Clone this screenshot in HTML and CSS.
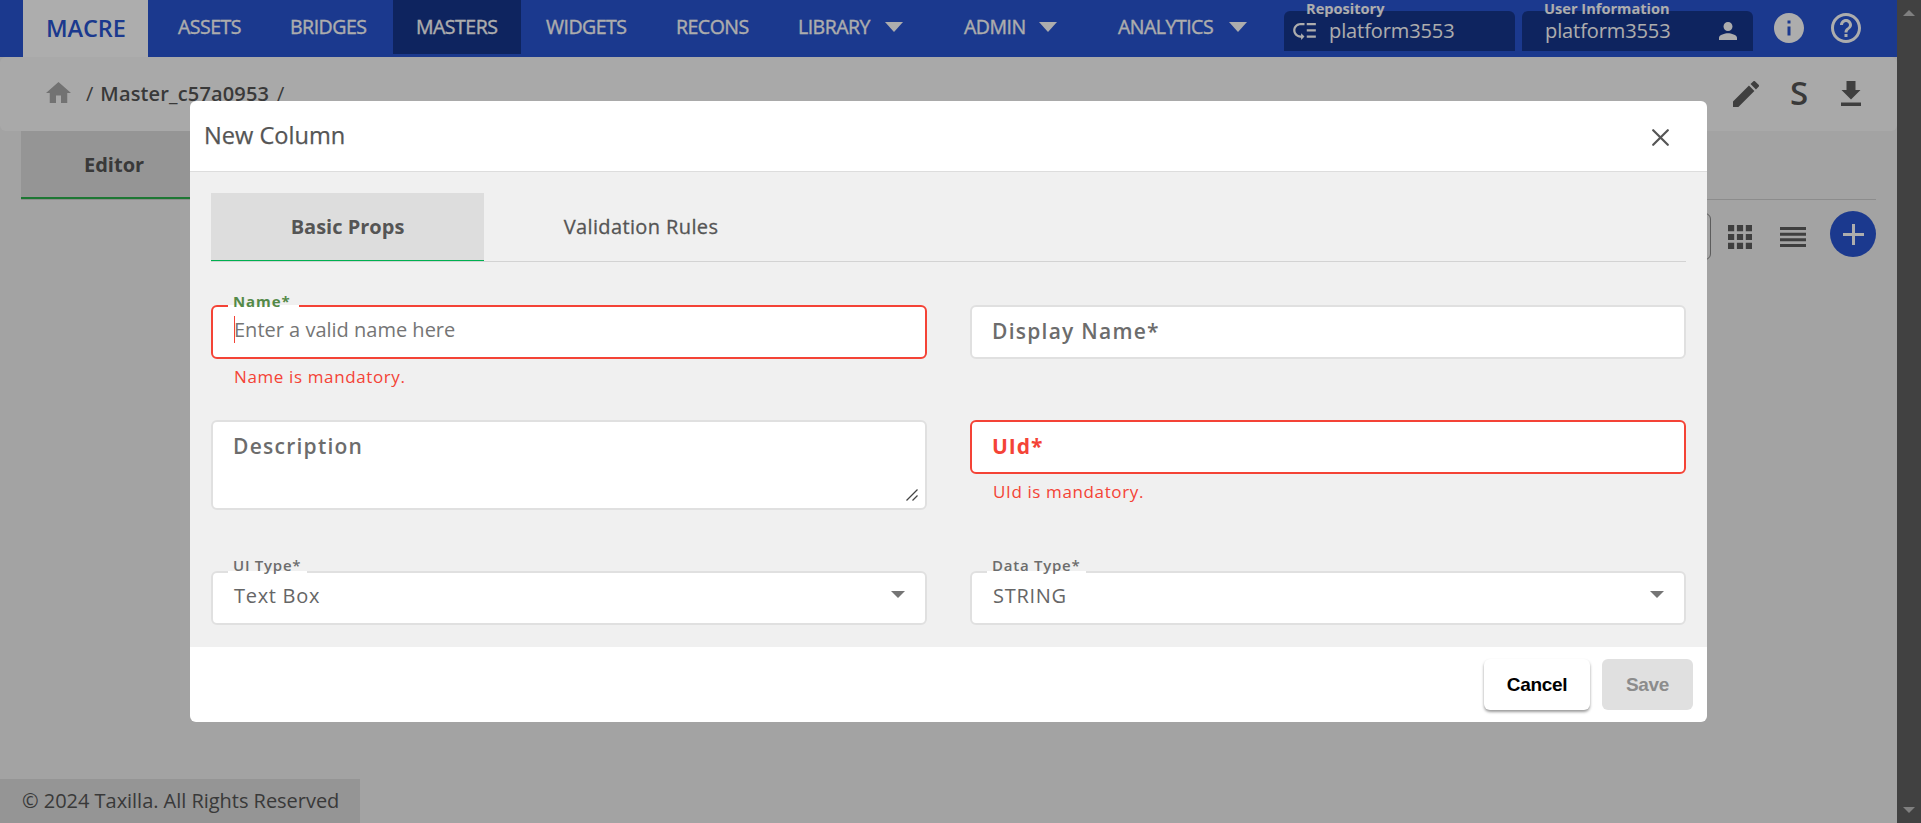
FILE: index.html
```html
<!DOCTYPE html>
<html lang="en">
<head>
<meta charset="utf-8">
<title>New Column</title>
<link rel="stylesheet" href="styles.css">
</head>
<body>
<div class="app">
  <div class="page">
    <header class="topbar">
      <div class="brand">MACRE</div>
      <nav class="nav">
        <a class="nav-item assets">ASSETS</a>
        <a class="nav-item bridges">BRIDGES</a>
        <a class="nav-item masters active">MASTERS</a>
        <a class="nav-item widgets">WIDGETS</a>
        <a class="nav-item recons">RECONS</a>
        <a class="nav-item library">LIBRARY<i class="tri"></i></a>
        <a class="nav-item admin">ADMIN<i class="tri"></i></a>
        <a class="nav-item analytics">ANALYTICS<i class="tri"></i></a>
      </nav>
      <div class="info-box repo">
        <span class="info-label">Repository</span>
        <svg class="repo-icon" width="23" height="17" viewBox="2 5 20 15" fill="#fff"><path d="M14 5h8v2h-8zm0 5.500h8v2h-8zm0 5.500h8v2h-8zM2 11.500C2 15.080 4.920 18 8.500 18H9v2l3-3-3-3v2h-.5C6.020 16 4 13.980 4 11.500S6.020 7 8.500 7H12V5H8.500C4.920 5 2 7.920 2 11.500z"/></svg>
        <span class="info-value">platform3553</span>
      </div>
      <div class="info-box user">
        <span class="info-label">User Information</span>
        <span class="info-value">platform3553</span>
        <svg class="person" width="18" height="18" viewBox="4 4 16 16" fill="#fff"><path d="M12 12c2.210 0 4-1.790 4-4s-1.790-4-4-4-4 1.790-4 4 1.790 4 4 4zm0 2c-2.670 0-8 1.340-8 4v2h16v-2c0-2.660-5.330-4-8-4z"/></svg>
      </div>
      <svg class="info-icon" width="30" height="30" viewBox="2 2 20 20" fill="#fff"><path d="M12 2C6.480 2 2 6.480 2 12s4.480 10 10 10 10-4.480 10-10S17.520 2 12 2zm1 15h-2v-6h2v6zm0-8h-2V7h2v2z"/></svg>
      <svg class="help-icon" width="30" height="30" viewBox="2 2 20 20" fill="#fff"><path d="M11 18h2v-2h-2v2zm1-16C6.480 2 2 6.480 2 12s4.480 10 10 10 10-4.480 10-10S17.520 2 12 2zm0 18c-4.410 0-8-3.590-8-8s3.590-8 8-8 8 3.590 8 8-3.590 8-8 8zm0-14c-2.210 0-4 1.790-4 4h2c0-1.100.9-2 2-2s2 .9 2 2c0 2-3 1.750-3 5h2c0-2.250 3-2.500 3-5 0-2.210-1.790-4-4-4z"/></svg>
    </header>

    <section class="crumbs">
      <svg class="home" width="25" height="21" viewBox="2 3 20 17" preserveAspectRatio="none" fill="#a8a8a8"><path d="M10 20v-6h4v6h5v-8h3L12 3 2 12h3v8z"/></svg>
      <span class="slash">/</span>
      <b class="crumb-name">Master_c57a0953</b>
      <span class="slash">/</span>
      <div class="tools">
        <svg width="26" height="26" viewBox="3 3 18 18" fill="#5e5e5e"><path d="M3 17.250V21h3.750L17.810 9.940l-3.750-3.750L3 17.250zM20.710 7.040a1 1 0 0 0 0-1.410l-2.340-2.340a1 1 0 0 0-1.410 0l-1.830 1.830 3.750 3.750 1.830-1.830z"/></svg>
        <span class="s-tool">S</span>
        <svg width="20" height="25" viewBox="0 0 20 25" fill="#5e5e5e"><path d="M5.500 0h9v9h5L10 18.500.5 9h5zM0 21.500h20V25H0z"/></svg>
      </div>
    </section>

    <section class="editor">
      <div class="tabs"><div class="tab-editor">Editor</div></div>
      <div class="view-tools">
        <div class="search"></div>
        <svg class="grid-icon" width="24" height="24" viewBox="0 0 24 24" fill="#5e5e5e"><path d="M0 0h6.200v6.200H0zM8.900 0h6.200v6.200H8.900zM17.800 0H24v6.200h-6.200zM0 8.900h6.200v6.200H0zM8.900 8.900h6.200v6.200H8.900zM17.800 8.900H24v6.200h-6.200zM0 17.800h6.200V24H0zM8.900 17.800h6.200V24H8.900zM17.800 17.800H24V24h-6.200z"/></svg>
        <svg class="list-icon" width="26" height="20" viewBox="0 0 26 20" fill="#5e5e5e"><path d="M0 0h26v3H0zM0 5.700h26v3H0zM0 11.300h26v3H0zM0 17h26v3H0z"/></svg>
        <div class="add"><svg width="21" height="21" viewBox="0 0 21 21" stroke="#fff" stroke-width="3"><path d="M10.500 0v21M0 10.500h21"/></svg></div>
      </div>
    </section>

    <footer class="copyright">© 2024 Taxilla. All Rights Reserved</footer>
  </div>
  <aside class="scrollbar"><i class="up"></i><i class="down"></i></aside>
</div>

<div class="backdrop">
  <div class="modal">
    <div class="modal-head">
      <span class="modal-title">New Column</span>
      <svg class="close" width="17" height="17" viewBox="0 0 17 17" stroke="#555" stroke-width="2.200" stroke-linecap="round"><path d="M1.200 1.200l14.600 14.600M15.800 1.200L1.200 15.800"/></svg>
    </div>
    <div class="modal-body">
      <div class="modal-tabs">
        <div class="mtab selected"><span class="t-basic">Basic Props</span></div>
        <div class="mtab"><span class="t-rules">Validation Rules</span></div>
      </div>
      <div class="form">
        <div class="field error focus">
          <span class="float">Name*</span>
          <div class="box"><i class="caret"></i><span class="placeholder">Enter a valid name here</span></div>
          <p class="message">Name is mandatory.</p>
        </div>
        <div class="field"><div class="box"><span class="label">Display Name*</span></div></div>
        <div class="field"><div class="box area"><span class="label">Description</span>
          <svg class="grip" width="12" height="12" viewBox="0 0 12 12" stroke="#444" stroke-width="1.300"><path d="M.5 11.500l11-11M6.500 11.500l5-5"/></svg></div></div>
        <div class="field error"><div class="box"><span class="label">UId*</span></div><p class="message">UId is mandatory.</p></div>
        <div class="field select"><span class="float">UI Type*</span><div class="box"><span class="value">Text Box</span><i class="drop"></i></div></div>
        <div class="field select"><span class="float">Data Type*</span><div class="box"><span class="value">STRING</span><i class="drop"></i></div></div>
      </div>
    </div>
    <div class="modal-foot">
      <button class="btn cancel">Cancel</button>
      <button class="btn save" disabled>Save</button>
    </div>
  </div>
</div>
</body>
</html>
```
FILE: styles.css
```css
* { box-sizing: border-box; }
body { margin: 0; width: 1921px; height: 823px; overflow: hidden; background: #f0f0f0; font-family: "Open Sans", "Noto Sans", sans-serif; font-size: 20px; color: #555; }
svg { display: block; flex: none; }
i { display: block; flex: none; }
span, b, a, p { white-space: nowrap; }

.app { display: flex; height: 823px; }
.page { width: 1897px; display: flex; flex-direction: column; background: #f0f0f0; }

.topbar { display: flex; height: 57px; background: #2954d1; color: #fff; padding-left: 23px; flex: none; }
.brand { width: 125px; height: 57px; padding-left: 23px; background: #fff; color: #2954d1; font-size: 23.500px; font-weight: 600; line-height: 57px; letter-spacing: -.1px; }
.nav { display: flex; width: 1136px; flex: none; }
.nav-item { display: flex; align-items: center; height: 54px; padding: 0 0 1px 23px; font-size: 19.500px; font-weight: 500; letter-spacing: -.5px; -webkit-text-stroke: .35px #fff; flex: none; }
.assets { width: 105px; margin-left: 7px; }
.bridges { width: 133px; padding-left: 30px; }
.masters { width: 128px; }
.widgets { width: 132px; padding-left: 25px; }
.recons { width: 120px; }
.library { width: 166px; padding-left: 25px; }
.admin { width: 154px; padding-left: 25px; }
.analytics { width: 160px; padding-left: 25px; }
.active { background: #16358d; }
.tri { border: 9px solid transparent; border-top: 10px solid #fff; border-bottom: 0; margin-left: auto; }
.library .tri { margin-right: 36px; }
.admin .tri { margin-right: 36px; }
.analytics .tri { margin-right: 6px; }

.info-box { position: relative; display: flex; align-items: center; width: 231px; height: 40px; margin-top: 11px; background: #16358d; border-radius: 6px 6px 0 0; flex: none; }
.repo { padding-left: 9px; margin-right: 7px; }
.user { padding-left: 23px; }
.info-label { position: absolute; left: 22px; top: -13px; font-size: 14.600px; line-height: 20px; font-weight: 700; }
.info-value { line-height: 40px; height: 40px; letter-spacing: -.1px; }
.repo .info-value { margin-left: 13px; }
.person { margin-left: auto; margin-right: 16px; }
.info-icon { margin: 13px 0 0 21px; }
.help-icon { margin: 13px 0 0 27px; }

.crumbs { display: flex; align-items: flex-start; height: 74px; padding: 22px 36px 0 46px; background: #fafafa; border-radius: 6px; line-height: 30px; flex: none; }
.home { margin: 3px 15px 0 0; }
.slash { margin-right: 7px; }
.crumb-name { font-weight: 600; font-size: 20px; letter-spacing: .15px; margin-right: 8px; }
.tools { display: flex; margin-left: auto; padding-top: 2px; }
.s-tool { font-size: 33px; line-height: 24px; font-weight: 600; margin: 0 32px 0 31px; width: 19px; }

.editor { flex: 1; padding: 0 21px; }
.tabs { height: 69px; border-bottom: 1px solid #cfcfcf; }
.tab-editor { width: 273px; height: 68px; padding-left: 63px; background: #dcdcdc; border-bottom: 2px solid #2cb04c; font-weight: 700; line-height: 68px; }
.view-tools { display: flex; justify-content: flex-end; align-items: flex-start; padding-top: 11px; }
.search { width: 300px; height: 47px; margin-top: 2px; border: 1px solid #888; border-radius: 6px; margin-right: 17px; }
.grid-icon { margin: 14px 28px 0 0; }
.list-icon { margin: 16px 24px 0 0; }
.add { display: flex; align-items: center; justify-content: center; width: 46px; height: 46px; border-radius: 50%; background: #2954d1; }

.copyright { width: 360px; height: 44px; padding-left: 22px; background: #dcdcdc; line-height: 43px; letter-spacing: -.03px; flex: none; white-space: nowrap; }

.scrollbar { display: flex; flex-direction: column; align-items: center; justify-content: space-between; width: 24px; padding: 10px 0; background: #616161; }
.up { border: 6px solid transparent; border-bottom-color: #bbb; border-top: 0; }
.down { border: 6px solid transparent; border-top-color: #bbb; border-bottom: 0; }

.backdrop { position: absolute; inset: 0; display: flex; align-items: flex-start; padding: 101px 0 0 190px; background: rgba(0, 0, 0, .32); }
.modal { display: flex; flex-direction: column; width: 1517px; height: 621px; background: #fff; border-radius: 6px; }
.modal-head { display: flex; justify-content: space-between; height: 71px; padding: 0 38px 0 14px; border-bottom: 1px solid #ddd; }
.modal-title { font-size: 23.600px; line-height: 68px; -webkit-text-stroke: .25px #555; }
.close { margin-top: 28px; }
.modal-body { height: 476px; padding: 21px 21px 0; background: #f0f0f0; }
.modal-tabs { display: flex; height: 69px; border-bottom: 1px solid #d3d3d3; }
.mtab { width: 273px; height: 68px; text-align: center; line-height: 67px; font-weight: 500; }
.selected { background: #ddd; border-bottom: 1px solid #00b050; font-weight: 700; }
.t-rules { margin-left: 41px; letter-spacing: .38px; -webkit-text-stroke: .3px #555; }

.form { display: grid; grid-template-columns: 716px 716px; column-gap: 43px; grid-template-rows: 115px 151px 54px; padding-top: 43px; }
.field { position: relative; }
.box { position: relative; display: flex; align-items: center; height: 54px; padding: 0 20px 0 21px; background: #fff; border: 2px solid #e0e0e0; border-radius: 6px; }
.error .box { border-color: #f44336; }
.area { height: 90px; align-items: flex-start; padding-top: 10px; }
.label { font-size: 21px; line-height: 28px; font-weight: 600; letter-spacing: 1.250px; color: #6c6c6c; margin: -1px 0 0 -1px; }
.area .label { margin-top: 0; }
.error .label { color: #f44336; font-weight: 700; letter-spacing: 1px; }
.float { position: absolute; z-index: 1; left: 17px; top: -14px; padding: 0 8px 0 5px; height: 16px; font-size: 15px; line-height: 20px; font-weight: 600; letter-spacing: .75px; color: #6c6c6c; background: linear-gradient(#fff, #fff) 0 14px / 100% 2px no-repeat; }
.focus .float { color: #548a48; font-weight: 700; letter-spacing: .9px; }
.select .float { top: -16px; height: 18px; padding-right: 6px; background-position: 0 16px; }
.caret { width: 1px; height: 27px; background: #f44336; margin-top: -5px; }
.placeholder { color: #757575; margin-top: -4px; margin-left: -1px; }
.message { margin: 0; padding-left: 23px; font-size: 17px; line-height: 24px; padding-top: 6px; letter-spacing: .62px; color: #f44336; }
.value { color: #666; margin-top: -5px; letter-spacing: .7px; }
.drop { margin-left: auto; margin-top: -7px; border: 7px solid transparent; border-top-color: #757575; border-bottom: 0; }
.grip { position: absolute; right: 7px; bottom: 7px; }

.modal-foot { display: flex; justify-content: flex-end; gap: 12px; padding: 12px 14px; }
.btn { height: 51px; border: 0; border-radius: 6px; padding: 0; font-family: "Liberation Sans", Arial, sans-serif; font-size: 19px; font-weight: 700; letter-spacing: -.3px; }
.cancel { width: 106px; background: #fff; color: #000; box-shadow: 0 2px 3px rgba(0, 0, 0, .4); }
.save { width: 91px; background: #e0e0e0; color: #8c8c8c; }
```
